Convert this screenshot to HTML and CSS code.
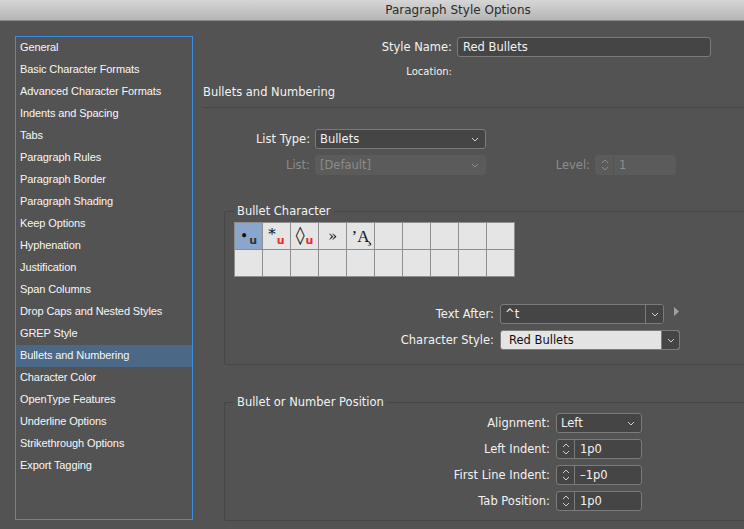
FILE: index.html
```html
<!DOCTYPE html>
<html lang="en">
  <head>
    <meta charset="UTF-8" />
    <title>Paragraph Style Options</title>
    <link rel="stylesheet" href="styles.css">
  </head>
  <body>
    <div class="titlebar">Paragraph Style Options</div>

    <div class="dialog">
      <!-- category list -->
      <ul class="nav">
        <li>General</li>
        <li>Basic Character Formats</li>
        <li>Advanced Character Formats</li>
        <li>Indents and Spacing</li>
        <li>Tabs</li>
        <li>Paragraph Rules</li>
        <li>Paragraph Border</li>
        <li>Paragraph Shading</li>
        <li>Keep Options</li>
        <li>Hyphenation</li>
        <li>Justification</li>
        <li>Span Columns</li>
        <li>Drop Caps and Nested Styles</li>
        <li>GREP Style</li>
        <li class="active">Bullets and Numbering</li>
        <li>Character Color</li>
        <li>OpenType Features</li>
        <li>Underline Options</li>
        <li>Strikethrough Options</li>
        <li>Export Tagging</li>
      </ul>

      <div class="panel">
        <div class="row">
          <span class="label name-label">Style Name:</span>
          <div class="input name-input">Red Bullets</div>
        </div>
        <div class="row location-row">
          <span class="label name-label small">Location:</span>
        </div>

        <h2 class="section-title">Bullets and Numbering</h2>

        <div class="row list-type-row">
          <span class="label list-label">List Type:</span>
          <div class="select list-select">
            <span>Bullets</span>
            <svg class="chevron" width="8" height="5" viewBox="0 0 8 5"><path d="M1 1 L4 4 L7 1" /></svg>
          </div>
        </div>
        <div class="row list-row disabled">
          <span class="label list-label">List:</span>
          <div class="select list-select">
            <span>[Default]</span>
            <svg class="chevron" width="8" height="5" viewBox="0 0 8 5"><path d="M1 1 L4 4 L7 1" /></svg>
          </div>
          <span class="label level-label">Level:</span>
          <div class="spinner level-spinner">
            <div class="spin-btn">
              <svg width="8" height="14" viewBox="0 0 8 14"><path d="M1 5 L4 2 L7 5 M1 9 L4 12 L7 9" /></svg>
            </div>
            <span class="spin-value">1</span>
          </div>
        </div>

        <!-- bullet character group -->
        <div class="group bullet-group">
          <div class="group-title">Bullet Character</div>
          <div class="glyph-grid">
            <div class="cell selected"><span class="glyph dot">•</span><span class="u">u</span></div>
            <div class="cell"><span class="glyph star">*</span><span class="u red">u</span></div>
            <div class="cell"><span class="glyph diamond">◊</span><span class="u red">u</span></div>
            <div class="cell"><span class="glyph">»</span></div>
            <div class="cell"><span class="glyph accent">’A̧</span></div>
            <div class="cell"></div>
            <div class="cell"></div>
            <div class="cell"></div>
            <div class="cell"></div>
            <div class="cell"></div>
            <div class="cell"></div>
            <div class="cell"></div>
            <div class="cell"></div>
            <div class="cell"></div>
            <div class="cell"></div>
            <div class="cell"></div>
            <div class="cell"></div>
            <div class="cell"></div>
            <div class="cell"></div>
            <div class="cell"></div>
          </div>

          <div class="row text-after-row">
            <span class="label char-label">Text After:</span>
            <div class="combo">
              <span class="combo-value">^t</span>
              <div class="combo-btn">
                <svg class="chevron" width="8" height="5" viewBox="0 0 8 5"><path d="M1 1 L4 4 L7 1" /></svg>
              </div>
            </div>
            <svg class="more" width="6" height="9" viewBox="0 0 6 9"><path d="M0 0 L5 4.5 L0 9 Z" /></svg>
          </div>
          <div class="row char-style-row">
            <span class="label char-label">Character Style:</span>
            <div class="combo light">
              <span class="combo-value">Red Bullets</span>
              <div class="combo-btn">
                <svg class="chevron" width="8" height="5" viewBox="0 0 8 5"><path d="M1 1 L4 4 L7 1" /></svg>
              </div>
            </div>
          </div>
        </div>

        <!-- position group -->
        <div class="group position-group">
          <div class="group-title">Bullet or Number Position</div>

          <div class="row pos-row">
            <span class="label pos-label">Alignment:</span>
            <div class="select pos-select">
              <span>Left</span>
              <svg class="chevron" width="8" height="5" viewBox="0 0 8 5"><path d="M1 1 L4 4 L7 1" /></svg>
            </div>
          </div>
          <div class="row pos-row">
            <span class="label pos-label">Left Indent:</span>
            <div class="spinner pos-spinner">
              <div class="spin-btn">
                <svg width="8" height="14" viewBox="0 0 8 14"><path d="M1 5 L4 2 L7 5 M1 9 L4 12 L7 9" /></svg>
              </div>
              <span class="spin-value">1p0</span>
            </div>
          </div>
          <div class="row pos-row">
            <span class="label pos-label">First Line Indent:</span>
            <div class="spinner pos-spinner">
              <div class="spin-btn">
                <svg width="8" height="14" viewBox="0 0 8 14"><path d="M1 5 L4 2 L7 5 M1 9 L4 12 L7 9" /></svg>
              </div>
              <span class="spin-value">–1p0</span>
            </div>
          </div>
          <div class="row pos-row">
            <span class="label pos-label">Tab Position:</span>
            <div class="spinner pos-spinner">
              <div class="spin-btn">
                <svg width="8" height="14" viewBox="0 0 8 14"><path d="M1 5 L4 2 L7 5 M1 9 L4 12 L7 9" /></svg>
              </div>
              <span class="spin-value">1p0</span>
            </div>
          </div>
        </div>
      </div>
    </div>
  </body>
</html>
```

FILE: styles.css
```css
body {
  margin: 0;
  width: 744px;
  height: 529px;
  overflow: hidden;
  background-color: #535353;
  font-family: "DejaVu Sans", sans-serif;
  font-size: 11.5px;
  color: #f2f2f2;
}

.titlebar {
  height: 20px;
  line-height: 20px;
  padding-left: 172px;
  text-align: center;
  font-size: 12px;
  color: #2b2b2b;
  background: linear-gradient(#d6d6d6, #b5b5b5);
  border-bottom: 1px solid #8a8a8a;
}

.dialog {
  display: flex;
  padding: 15px 0 0 15px;
}

/* left category list */
.nav {
  list-style: none;
  margin: 0;
  padding: 0;
  width: 176px;
  height: 482px;
  flex-shrink: 0;
  border: 1px solid #3a8ee6;
  font-family: "Liberation Sans", Arial, sans-serif;
  font-size: 11px;
  letter-spacing: -0.1px;
}

.nav li {
  height: 22px;
  line-height: 21px;
  padding-left: 4px;
  color: #f7f7f7;
}

.nav li.active {
  background-color: #4b6886;
}

.panel {
  flex: 1;
  min-width: 0;
  margin-left: 10px;
  padding-top: 1px;
}

.row {
  display: flex;
  align-items: center;
  gap: 5px;
  height: 20px;
}

.label {
  flex-shrink: 0;
  text-align: right;
  white-space: nowrap;
}

.name-label {
  width: 249px;
}

.small {
  font-size: 10px;
}

.location-row {
  margin-top: 7px;
  height: 14px;
}

.input {
  box-sizing: border-box;
  height: 20px;
  line-height: 18px;
  padding: 0 5px;
  background-color: #454545;
  border: 1px solid #7b7b7b;
  border-radius: 3px;
}

.name-input {
  width: 254px;
}

.section-title {
  margin: 7px 0 0;
  padding-bottom: 7px;
  font-size: 11.5px;
  font-weight: normal;
  line-height: 15px;
  border-bottom: 1px solid #464646;
}

.select {
  box-sizing: border-box;
  display: flex;
  align-items: center;
  justify-content: space-between;
  height: 20px;
  padding: 0 6px 0 4px;
  background-color: #454545;
  border: 1px solid #7b7b7b;
  border-radius: 3px;
}

.chevron path,
.spin-btn path {
  fill: none;
  stroke: #d0d0d0;
  stroke-width: 1;
}

.list-type-row {
  margin-top: 21px;
}

.list-row {
  margin-top: 6px;
}

.list-label {
  width: 107px;
}

.list-select {
  width: 171px;
}

.disabled {
  color: #8c8c8c;
}

.disabled .select,
.disabled .spinner {
  background-color: #5b5b5b;
  border-color: #5b5b5b;
}

.disabled .chevron path,
.disabled .spin-btn path {
  stroke: #8c8c8c;
}

.level-label {
  width: 99px;
}

.spinner {
  box-sizing: border-box;
  display: flex;
  align-items: center;
  height: 20px;
  background-color: #454545;
  border: 1px solid #7b7b7b;
  border-radius: 3px;
}

.spin-btn {
  display: flex;
  align-items: center;
  justify-content: center;
  width: 17px;
  height: 100%;
  border-right: 1px solid #7b7b7b;
}

.disabled .spin-btn {
  border-right-color: #535353;
}

.spin-value {
  padding-left: 5px;
}

.level-spinner {
  width: 81px;
}

/* grouped boxes */
.group {
  box-sizing: border-box;
  width: 520px;
  padding-left: 9px;
  border: 1px solid #464646;
  border-right: none;
  border-radius: 3px 0 0 3px;
}

.group-title {
  width: max-content;
  margin-top: -8px;
  padding: 0 3px;
  line-height: 15px;
  background-color: #535353;
}

.bullet-group {
  margin: 36px 0 0 21px;
  padding-bottom: 14px;
}

.glyph-grid {
  display: grid;
  grid-template-columns: repeat(10, 27px);
  grid-template-rows: repeat(2, 26px);
  gap: 1px;
  width: max-content;
  margin-top: 3px;
  padding: 1px;
  background-color: #8e8e8e;
}

.cell {
  display: flex;
  align-items: center;
  justify-content: center;
  background-color: #e5e5e5;
  color: #111;
  font-family: "DejaVu Serif", "Liberation Serif", serif;
}

.cell.selected {
  background-color: #8ba6cc;
}

.glyph {
  font-size: 15px;
  line-height: 1;
}

.glyph.dot {
  font-size: 14px;
}

.glyph.star {
  margin-top: -4px;
}

.glyph.diamond {
  font-size: 18px;
  margin-top: -2px;
}

.glyph.accent {
  font-family: "Liberation Serif", serif;
  font-size: 17px;
}

.u {
  align-self: flex-end;
  margin: 0 0 3px 1px;
  font-family: "DejaVu Sans", sans-serif;
  font-size: 11px;
  font-weight: bold;
  line-height: 1;
  color: #333;
}

.u.red {
  color: #ec2b2b;
}

.text-after-row {
  margin-top: 27px;
  gap: 6px;
}

.char-style-row {
  margin-top: 6px;
  gap: 6px;
}

.char-label {
  width: 260px;
}

.combo {
  box-sizing: border-box;
  display: flex;
  width: 164px;
  height: 20px;
  background-color: #454545;
  border: 1px solid #7b7b7b;
  border-radius: 3px;
}

.combo-value {
  flex: 1;
  line-height: 18px;
  padding-left: 4px;
}

.combo-btn {
  display: flex;
  align-items: center;
  justify-content: center;
  width: 17px;
  border-left: 1px solid #7b7b7b;
  background-color: #454545;
  border-radius: 0 2px 2px 0;
}

.combo.light {
  width: 180px;
  background-color: #e4e4e4;
  color: #111;
}

.combo.light .combo-value {
  padding-left: 8px;
}

.more {
  margin-left: 4px;
  margin-top: -6px;
  fill: #a0a0a0;
}

.position-group {
  margin: 37px 0 0 21px;
  padding-bottom: 9px;
}

.pos-row {
  margin-top: 6px;
  gap: 6px;
}

.position-group .group-title + .pos-row {
  margin-top: 3px;
}

.pos-label {
  width: 316px;
}

.pos-select {
  width: 86px;
}

.pos-spinner {
  width: 86px;
}
```
